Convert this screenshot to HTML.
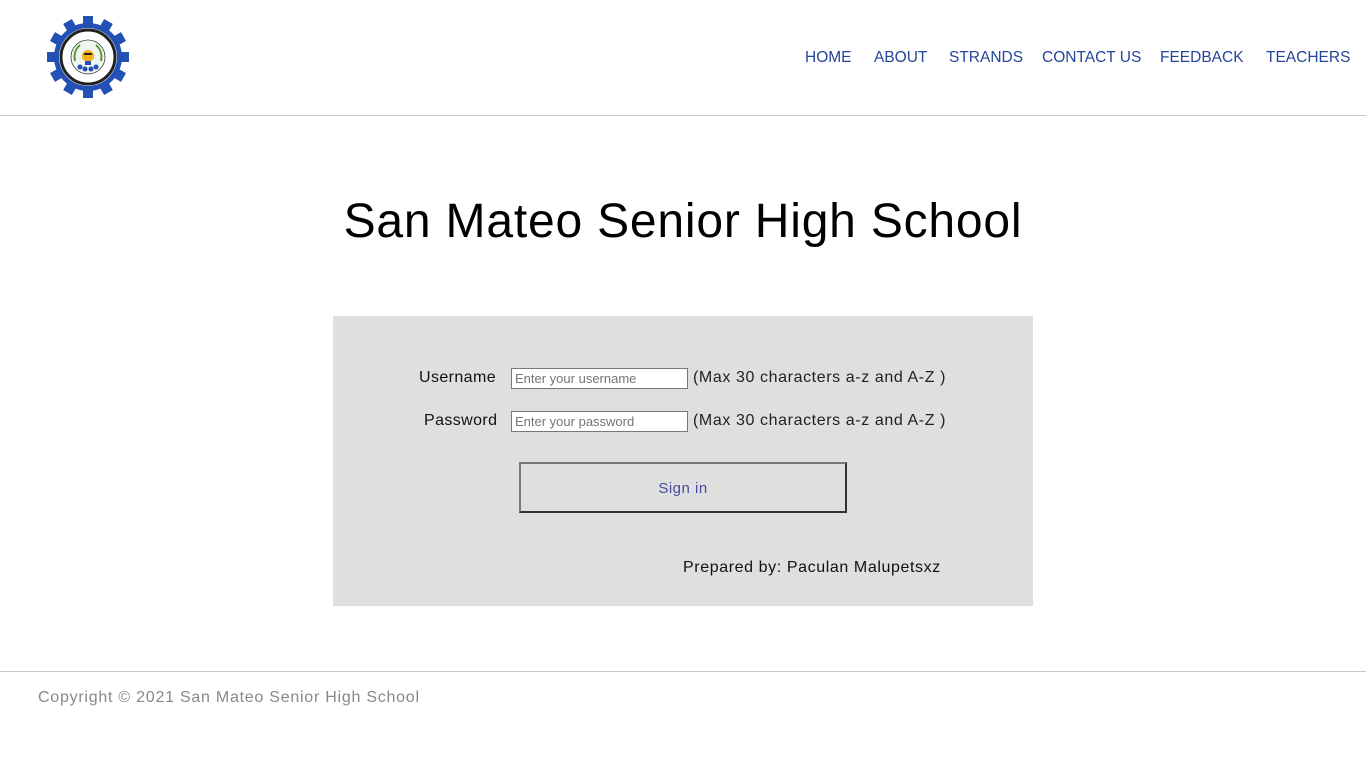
<!DOCTYPE html>
<html><head><meta charset="utf-8"><style>
*{margin:0;padding:0;box-sizing:border-box}
body{width:1366px;height:768px;background:#fff;font-family:"Liberation Sans",sans-serif;position:relative;overflow:hidden}
.a{position:absolute;white-space:nowrap}
.nav{top:49px;font-size:15.5px;color:#25449a}
.hr{position:absolute;left:0;width:1366px;height:1px;background:#c8c8c8}
.lbl{font-size:16px;color:#111;letter-spacing:0.4px}
.note{font-size:16px;color:#222;letter-spacing:0.6px}
input{position:absolute;height:21px;border:1px solid #777;background:#fff;font:13px "Liberation Sans",sans-serif;padding:0 3px;color:#666}
</style></head><body>
<svg class="a" style="left:47px;top:16px" width="82" height="82" viewBox="0 0 82 82">
<g fill="#2350b4" transform="translate(41 41)">
<circle r="34"/>
<g id="t"><rect x="-5" y="-41" width="10" height="10"/></g>
<use href="#t" transform="rotate(30)"/><use href="#t" transform="rotate(60)"/><use href="#t" transform="rotate(90)"/><use href="#t" transform="rotate(120)"/><use href="#t" transform="rotate(150)"/><use href="#t" transform="rotate(180)"/><use href="#t" transform="rotate(210)"/><use href="#t" transform="rotate(240)"/><use href="#t" transform="rotate(270)"/><use href="#t" transform="rotate(300)"/><use href="#t" transform="rotate(330)"/>
<circle r="29" fill="#fff"/>
<circle r="27" fill="none" stroke="#222" stroke-width="3"/>
<circle r="17" fill="none" stroke="#333" stroke-width="0.8"/>
<circle r="16" fill="#eef4ee"/>
<path d="M-13 4 Q-15 -6 -8 -12" stroke="#5a9a3a" stroke-width="2" fill="none"/>
<path d="M13 4 Q15 -6 8 -12" stroke="#5a9a3a" stroke-width="2" fill="none"/>
<circle cy="-1" r="6" fill="#f2b01e"/>
<rect x="-3" y="4" width="6" height="4" fill="#2350b4"/>
<rect x="-4" y="-4" width="8" height="2" fill="#222"/>
<circle cx="-8" cy="10" r="2.5" fill="#2350b4"/><circle cx="-3" cy="12" r="2.5" fill="#2350b4"/><circle cx="3" cy="12" r="2.5" fill="#2350b4"/><circle cx="8" cy="10" r="2.5" fill="#2350b4"/>
</g></svg>
<div class="a nav" style="left:805px">HOME</div>
<div class="a nav" style="left:874px">ABOUT</div>
<div class="a nav" style="left:949px">STRANDS</div>
<div class="a nav" style="left:1042px">CONTACT US</div>
<div class="a nav" style="left:1160px">FEEDBACK</div>
<div class="a nav" style="left:1266px">TEACHERS</div>
<div class="hr" style="top:115px"></div>
<div class="a" style="left:0;width:1366px;text-align:center;top:194px;font-size:48px;letter-spacing:0.8px;color:#000">San Mateo Senior High School</div>
<div class="a" style="left:333px;top:316px;width:700px;height:290px;background:#dfdfdf"></div>
<div class="a lbl" style="left:419px;top:369px">Username</div>
<input style="left:511px;top:368px;width:177px" placeholder="Enter your username">
<div class="a note" style="left:693px;top:369px">(Max 30 characters a-z and A-Z )</div>
<div class="a lbl" style="left:424px;top:412px">Password</div>
<input style="left:511px;top:411px;width:177px" placeholder="Enter your password">
<div class="a note" style="left:693px;top:412px">(Max 30 characters a-z and A-Z )</div>
<div class="a" style="left:519px;top:462px;width:328px;height:51px;border:2px solid;border-color:#777 #333 #333 #777;text-align:center;line-height:49px;font-size:15px;letter-spacing:0.5px;color:#4a4aa0">Sign in</div>
<div class="a note" style="left:683px;top:559px;color:#111">Prepared by: Paculan Malupetsxz</div>
<div class="hr" style="top:671px"></div>
<div class="a" style="left:38px;top:689px;font-size:16px;letter-spacing:0.75px;color:#888">Copyright © 2021 San Mateo Senior High School</div>
</body></html>
